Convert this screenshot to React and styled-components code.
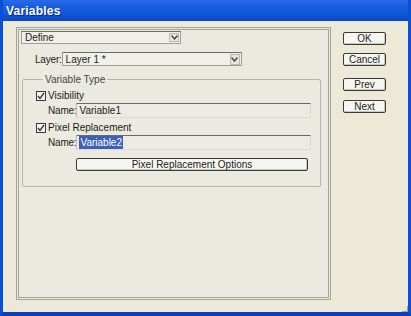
import React from "react";
import styled, { createGlobalStyle } from "styled-components";

const Global = createGlobalStyle`
  html, body { margin: 0; padding: 0; background: #ece9d8; }
  body { font-family: Tahoma, "Liberation Sans", "DejaVu Sans", sans-serif; font-size: 11px; color: #1a1a1a; }
  * { box-sizing: border-box; }
`;

const Window = styled.div`
  width: 411px;
  height: 316px;
  display: flex;
  flex-direction: column;
  background: #ece9d8;
  border-left: 3px solid #0b4fd8;
  border-right: 3px solid #0b4fd8;
  border-bottom: 4px solid #0a3fb8;
  position: relative;
  overflow: hidden;
`;

const TitleBar = styled.div`
  height: 21px;
  margin: 0 -3px;
  padding-left: 6px;
  display: flex;
  align-items: center;
  background: linear-gradient(180deg, #2a6ae8 0%, #1a5ee0 30%, #0f55d8 70%, #0b48c4 100%);
  color: #fff;
  font-family: "Liberation Sans", "DejaVu Sans", sans-serif;
  font-weight: bold;
  font-size: 12px;
  letter-spacing: 0.2px;
  text-shadow: 1px 1px 0 #0a2a80;
`;

const Body = styled.div`
  flex: 1;
  display: flex;
  padding: 6px 0 12px 13px;
`;

const MainPanel = styled.div`
  width: 315px;
  border: 3px double #a3a398;
  padding: 1px 2px 0 2px;
  display: flex;
  flex-direction: column;
  background: #ebeae0;
`;

const Select = styled.div`
  width: ${p => p.w}px;
  height: ${p => p.h || 13}px;
  display: flex;
  align-items: center;
  justify-content: space-between;
  background: #f1f0e8;
  border: 1px solid #9f9f95;
  border-top-color: #6a6a64;
  padding-left: 3px;
  font-size: 10px;
`;

const Arrow = styled.div`
  width: 10px;
  height: ${p => p.h || 9}px;
  margin-right: 1px;
  border: 1px solid #b8b8b0;
  background: #e6e6de;
  display: flex;
  align-items: center;
  justify-content: center;
`;

const Row = styled.div`
  display: flex;
  align-items: center;
  margin-top: ${p => p.mt || 0}px;
  padding-left: ${p => p.pl || 0}px;
`;

const Label = styled.span`
  font-size: 10px;
  white-space: nowrap;
  letter-spacing: -0.2px;
  flex: 0 0 ${p => p.w}px;
  color: #222;
`;

const Group = styled.fieldset`
  margin: 8px 0 0 1px;
  width: 299px;
  height: 113px;
  border: 1px solid #b5b5aa;
  border-radius: 2px;
  padding: 0 0 0 13px;
  display: flex;
  flex-direction: column;
`;

const Legend = styled.legend`
  font-size: 10px;
  color: #444;
  padding: 0 2px;
  margin-left: 7px;
`;

const CheckRow = styled.label`
  display: flex;
  align-items: center;
  gap: 2px;
  font-size: 10px;
  white-space: nowrap;
  margin-top: ${p => p.mt || 0}px;
`;

const Box = styled.span`
  width: 10px;
  height: 10px;
  border: 1px solid #3a3a3a;
  background: #f4f4ee;
  display: inline-flex;
  align-items: center;
  justify-content: center;
`;

const Input = styled.div`
  width: 235px;
  height: 15px;
  background: #ebebe3;
  border-top: 1px solid #6a6a64;
  border-left: 1px solid #c0c0b8;
  border-right: 1px solid #d8d8d0;
  border-bottom: 1px solid #dcdcd4;
  font-size: 10px;
  display: flex;
  align-items: center;
  padding-left: 2px;
`;

const Selected = styled.span`
  background: #3b62b8;
  color: #fff;
  padding: 1px 1px;
`;

const Button = styled.div`
  width: ${p => p.w}px;
  height: 13px;
  margin-top: ${p => p.mt || 0}px;
  margin-left: ${p => p.ml || 0}px;
  border: 1px solid #3a3a36;
  border-radius: 2px;
  background: #f6f6f0;
  box-shadow: inset -1px -1px 0 #c8c8be;
  display: flex;
  align-items: center;
  justify-content: center;
  font-size: 10px;
  color: #222;
`;

const Side = styled.div`
  display: flex;
  flex-direction: column;
  padding: 5px 0 0 12px;
`;

const Grip = styled.div`
  position: absolute;
  right: 0;
  bottom: 0;
  width: 6px;
  height: 6px;
  border-right: 1px solid #a0a090;
  border-bottom: 1px solid #a0a090;
`;

const Chevron = () => (
  <svg width="7" height="5" viewBox="0 0 7 5">
    <path d="M0.5 0.5 L3.5 4 L6.5 0.5" stroke="#444" strokeWidth="1.4" fill="none" />
  </svg>
);

const Check = () => (
  <svg width="8" height="8" viewBox="0 0 8 8">
    <path d="M1 4 L3 6.5 L7 1" stroke="#333" strokeWidth="1.3" fill="none" />
  </svg>
);

export default function App() {
  return (
    <>
      <Global />
      <Window>
        <TitleBar>Variables</TitleBar>
        <Body>
          <MainPanel>
            <Select w={160}>
              Define
              <Arrow><Chevron /></Arrow>
            </Select>
            <Row mt={8} pl={14}>
              <Label w={26}>Layer:</Label>
              <Select w={180} h={14}>
                Layer 1 *
                <Arrow h={11}><Chevron /></Arrow>
              </Select>
            </Row>
            <Group>
              <Legend>Variable Type</Legend>
              <CheckRow mt={5}><Box><Check /></Box>Visibility</CheckRow>
              <Row mt={2} pl={12}>
                <Label w={27}>Name:</Label>
                <Input>Variable1</Input>
              </Row>
              <CheckRow mt={4}><Box><Check /></Box>Pixel Replacement</CheckRow>
              <Row mt={2} pl={12}>
                <Label w={27}>Name:</Label>
                <Input><Selected>Variable2</Selected></Input>
              </Row>
              <Button w={232} mt={8} ml={40}>Pixel Replacement Options</Button>
            </Group>
          </MainPanel>
          <Side>
            <Button w={43}>OK</Button>
            <Button w={43} mt={8}>Cancel</Button>
            <Button w={43} mt={12}>Prev</Button>
            <Button w={43} mt={9}>Next</Button>
          </Side>
        </Body>
        <Grip />
      </Window>
    </>
  );
}
